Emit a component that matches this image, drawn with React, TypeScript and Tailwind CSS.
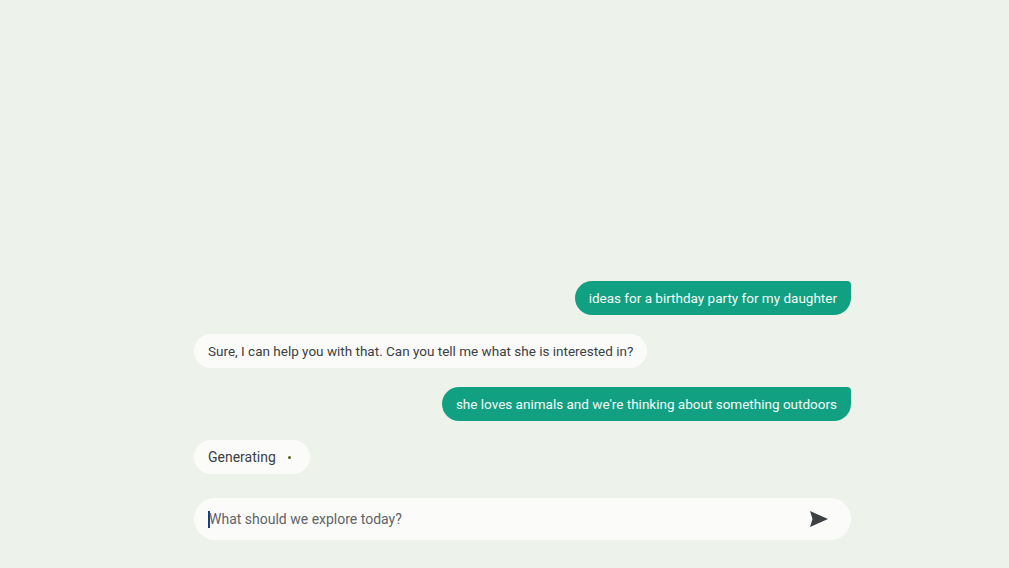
import React from "react";

function UserBubble({ text }: { text: string }) {
  return (
    <div className="flex justify-end">
      <div className="h-[34px] flex items-center px-[14px] bg-[#12a083] text-[#f4fbf8] text-[13.5px] rounded-[17px] rounded-tr-[4px]">
        {text}
      </div>
    </div>
  );
}

function BotBubble({ children, size = "text-[13.5px]" }: { children: React.ReactNode; size?: string }) {
  return (
    <div className="flex justify-start">
      <div className={`h-[34px] flex items-center px-[14px] bg-[#fbfcfa] text-[#3c4043] rounded-[17px] ${size}`}>
        {children}
      </div>
    </div>
  );
}

export default function App() {
  return (
    <div
      className="w-full h-screen bg-[#edf2eb] flex flex-col justify-end pb-[28px]"
      style={{ fontFamily: "Roboto, 'Noto Sans', sans-serif" }}
    >
      <div className="ml-[194px] w-[657px] flex flex-col">
        <div className="h-[1px]" />
        <UserBubble text="ideas for a birthday party for my daughter" />
        <div className="h-[19px]" />
        <BotBubble>Sure, I can help you with that. Can you tell me what she is interested in?</BotBubble>
        <div className="h-[19px]" />
        <UserBubble text="she loves animals and we're thinking about something outdoors" />
        <div className="h-[19px]" />
        <BotBubble size="text-[14px]">
          <span>Generating</span>
          <span className="ml-[12px] mr-[5px] w-[3px] h-[3px] rounded-full bg-[#5a5a20]" />
        </BotBubble>
        <div className="h-[24px]" />
        <div className="h-[42px] flex items-center bg-[#fbfcfa] rounded-[21px] pl-[14px] pr-[22px]">
          <span className="w-[2px] h-[17px] bg-[#1a3f7a] mr-[-1px]" />
          <span className="flex-1 text-[14px] text-[#5f6368]">What should we explore today?</span>
          <svg width="20" height="18" viewBox="0 0 20 18" className="text-[#3c4043]">
            <path d="M1 1 L19 9 L1 17 L3.5 9 Z" fill="currentColor" />
          </svg>
        </div>
      </div>
    </div>
  );
}
